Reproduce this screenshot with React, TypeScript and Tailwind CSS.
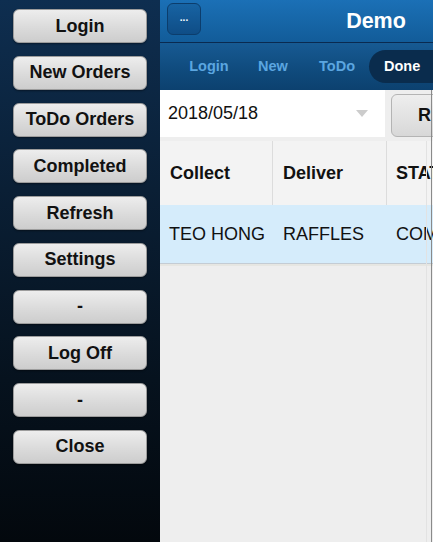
import React from "react";

const panelItems = ["Login", "New Orders", "ToDo Orders", "Completed", "Refresh", "Settings", "-", "Log Off", "-", "Close"];

export default function App() {
  return (
    <div
      className="w-[433px] h-[542px] overflow-hidden flex relative"
      style={{ fontFamily: '"Liberation Sans", Arial, sans-serif' }}
    >
      {/* Left panel */}
      <div className="w-[160px] shrink-0 h-full bg-[linear-gradient(180deg,#0e2e50_0%,#0a1f35_35%,#06121e_70%,#03080d_100%)] px-[13px] pt-[9px] flex flex-col gap-[12.75px]">
        {panelItems.map((t, i) => (
          <div
            key={i}
            className="h-[34px] w-[134px] rounded-[6px] border border-[#9c9c9c] bg-[linear-gradient(180deg,#ededed_0%,#d9d9d9_60%,#cdcdcd_100%)] flex items-center justify-center text-[18px] font-bold text-[#111] shadow-[0_1px_2px_rgba(0,0,0,0.4)]"
          >
            {t}
          </div>
        ))}
      </div>

      {/* Main page */}
      <div className="w-[433px] shrink-0 h-full flex flex-col bg-[#eeeeee] relative">
        {/* Header */}
        <div className="h-[42px] bg-[linear-gradient(180deg,#1b70b6_0%,#125c99_100%)] relative flex items-center justify-center">
          <div className="absolute left-[7px] top-[3px] w-[34px] h-[32px] rounded-[6px] border border-[#0c3d6c] bg-[linear-gradient(180deg,#1763a3_0%,#0f4d86_100%)] flex items-center justify-center text-white text-[10px] font-bold leading-none pb-[2px]">
            ...
          </div>
          <span className="text-white font-bold text-[21.5px] ml-[-1px]">Demo</span>
        </div>
        <div className="h-[1px] bg-[#0a2a50]" />
        {/* Navbar */}
        <div className="h-[47px] bg-[linear-gradient(180deg,#175a93_0%,#0f4a7c_60%,#0c416f_100%)] flex items-center pl-[17px]">
          {["Login", "New", "ToDo"].map((t) => (
            <div key={t} className="w-[64px] text-center text-[14.5px] font-bold text-[#5ba6e0]">
              {t}
            </div>
          ))}
          <div className="w-[74px] shrink-0 h-[33px] rounded-l-full bg-[#0a2c4d] flex items-center pl-[15px] text-[14.5px] font-bold text-white">
            Done
          </div>
        </div>
        {/* Filter row */}
        <div className="h-[51px] flex items-start">
          <div className="w-[225px] h-[47px] bg-white flex items-center pl-[8px] pr-[17px] justify-between">
            <span className="text-[18px] text-[#111]">2018/05/18</span>
            <svg width="12" height="8" viewBox="0 0 12 8">
              <path d="M0 0 L12 0 L6 7 Z" fill="#cccccc" />
            </svg>
          </div>
          <div className="ml-[6px] mt-[4px] w-[120px] shrink-0 h-[43px] rounded-[6px] border border-[#b4b4b4] bg-[linear-gradient(180deg,#eeeeee_0%,#d8d8d8_100%)] flex items-center pl-[26px] text-[18px] font-bold text-[#111]">
            R
          </div>
        </div>
        {/* Table */}
        <div className="flex h-[64px] bg-[#f3f3f3] text-[18px] font-bold text-[#111]">
          <div className="w-[113px] border-r border-[#dcdcdc] flex items-center pl-[10px]">Collect</div>
          <div className="w-[114px] border-r border-[#dcdcdc] flex items-center pl-[10px]">Deliver</div>
          <div className="flex-1 flex items-center pl-[9px]">STATUS</div>
        </div>
        <div className="flex h-[59px] bg-[#d5ecfb] text-[18px] text-[#111] border-b border-[#c4ccd4]">
          <div className="w-[113px] flex items-center pl-[9px] whitespace-nowrap">TEO HONG</div>
          <div className="w-[114px] flex items-center pl-[10px]">RAFFLES</div>
          <div className="flex-1 flex items-center pl-[9px]">COMPLETED</div>
        </div>
        <div className="h-[2px] bg-[#e6e6e2]" />
        <div className="flex-1" />
      </div>

      {/* right edge lines */}
      <div className="absolute left-[426px] top-[141px] bottom-0 w-[1px] bg-[#e2e2e2]" />
      <div className="absolute left-[431px] top-[90px] bottom-0 w-[1px] bg-[#8a8a8a]" />
    </div>
  );
}
